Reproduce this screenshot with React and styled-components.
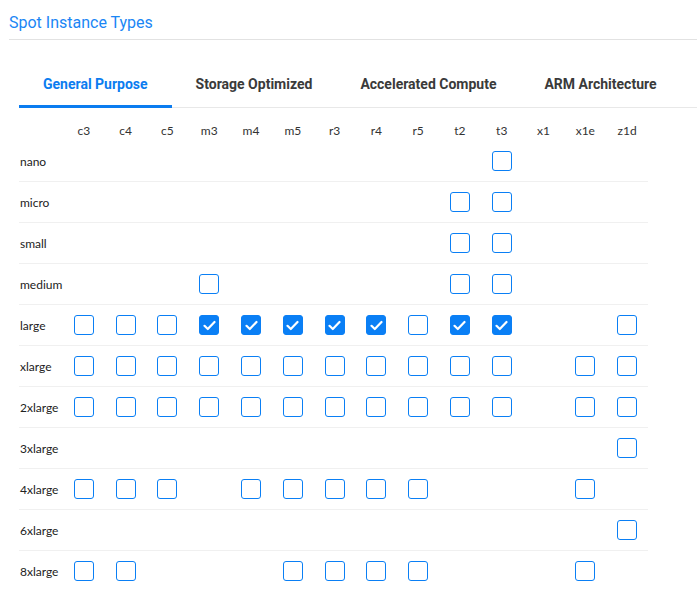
import React, { useState } from 'react';
import styled, { createGlobalStyle } from 'styled-components';

const GlobalStyle = createGlobalStyle`
    body {
        margin: 0;
        background: #fff;
        font-family: Roboto, "Liberation Sans", sans-serif;
    }
`

const families = ['c3', 'c4', 'c5', 'm3', 'm4', 'm5', 'r3', 'r4', 'r5', 't2', 't3', 'x1', 'x1e', 'z1d'];

// which families exist for each size, and which start out ticked
const sizes = [
    { name: 'nano', types: ['t3'] },
    { name: 'micro', types: ['t2', 't3'] },
    { name: 'small', types: ['t2', 't3'] },
    { name: 'medium', types: ['m3', 't2', 't3'] },
    { name: 'large', types: ['c3', 'c4', 'c5', 'm3', 'm4', 'm5', 'r3', 'r4', 'r5', 't2', 't3', 'z1d'], checked: ['m3', 'm4', 'm5', 'r3', 'r4', 't2', 't3'] },
    { name: 'xlarge', types: ['c3', 'c4', 'c5', 'm3', 'm4', 'm5', 'r3', 'r4', 'r5', 't2', 't3', 'x1e', 'z1d'] },
    { name: '2xlarge', types: ['c3', 'c4', 'c5', 'm3', 'm4', 'm5', 'r3', 'r4', 'r5', 't2', 't3', 'x1e', 'z1d'] },
    { name: '3xlarge', types: ['z1d'] },
    { name: '4xlarge', types: ['c3', 'c4', 'c5', 'm4', 'm5', 'r3', 'r4', 'r5', 'x1e'] },
    { name: '6xlarge', types: ['z1d'] },
    { name: '8xlarge', types: ['c3', 'c4', 'm5', 'r3', 'r4', 'r5', 'x1e'] },
];

const tabs = ['General Purpose', 'Storage Optimized', 'Accelerated Compute', 'ARM Architecture'];

const Page = styled.div`
    padding: 11px 0 0 9px;
`

const Title = styled.h2`
    margin: 0;
    padding-bottom: 5px;
    font-size: 16px;
    font-weight: 400;
    line-height: 23px;
    color: #1a86f5;
    border-bottom: 1px solid #e2e2e2;
`

const Section = styled.div`
    padding: 20px 0 0 10px;
`

const TabBar = styled.div`
    display: flex;
    height: 47px;
    border-bottom: 1px solid #e8e8e8;
`

const Tab = styled.button`
    padding: 3px 24px 0;
    margin-bottom: -1px;
    border: none;
    border-bottom: 3px solid ${p => p.$active ? '#0b7cf0' : 'transparent'};
    background: none;
    font-family: Roboto, "Liberation Sans", sans-serif;
    font-size: 14px;
    font-weight: 700;
    color: ${p => p.$active ? '#0b7cf0' : '#3a3a3a'};
    cursor: pointer;
`

const Grid = styled.div`
    width: 629px;
    font-family: Lato, "Liberation Sans", sans-serif;
    font-size: 12px;
    color: #222;
`

const Row = styled.div`
    display: grid;
    grid-template-columns: 44px repeat(14, 1fr);
    align-items: center;
    height: ${p => p.$head ? '32px' : '40px'};
    border-bottom: 1px solid ${p => p.$head || p.$last ? 'transparent' : '#f0f0f0'};
`

const HeadCell = styled.div`
    text-align: center;
    padding-top: 12px;
    color: #333;
`

const Label = styled.div`
    padding-left: 1px;
`

const Cell = styled.div`
    display: flex;
    justify-content: center;
`

const Box = styled.button`
    width: 20px;
    height: 20px;
    padding: 0;
    display: flex;
    align-items: center;
    justify-content: center;
    border: 1.5px solid #0a7ff5;
    border-radius: 3px;
    background: ${p => p.$on ? '#0a7ff5' : '#fff'};
    cursor: pointer;
`

const Check = () => (
    <svg width="13" height="11" viewBox="0 0 13 11">
        <polyline points="1.5,5.8 4.8,9 11.5,2" fill="none" stroke="#fff" strokeWidth="2.2" strokeLinecap="round" strokeLinejoin="round" />
    </svg>
)

const App = () => {
    const [active, setActive] = useState(0);
    const [ticked, setTicked] = useState(() => {
        const start = {};
        sizes.forEach(s => (s.checked || []).forEach(t => { start[`${t}.${s.name}`] = true; }));
        return start;
    });

    const toggle = key => setTicked(prev => ({ ...prev, [key]: !prev[key] }));

    return (
        <Page>
            <GlobalStyle />
            <Title>Spot Instance Types</Title>
            <Section>
                <TabBar>
                    {tabs.map((tab, i) => (
                        <Tab key={tab} $active={i === active} onClick={() => setActive(i)}>{tab}</Tab>
                    ))}
                </TabBar>
                <Grid>
                    <Row $head>
                        <div />
                        {families.map(f => <HeadCell key={f}>{f}</HeadCell>)}
                    </Row>
                    {sizes.map((size, i) => (
                        <Row key={size.name} $last={i === sizes.length - 1}>
                            <Label>{size.name}</Label>
                            {families.map(f => {
                                const key = `${f}.${size.name}`;
                                return (
                                    <Cell key={f}>
                                        {size.types.includes(f) && (
                                            <Box $on={ticked[key]} onClick={() => toggle(key)}>
                                                {ticked[key] && <Check />}
                                            </Box>
                                        )}
                                    </Cell>
                                )
                            })}
                        </Row>
                    ))}
                </Grid>
            </Section>
        </Page>
    )
}

export default App;
